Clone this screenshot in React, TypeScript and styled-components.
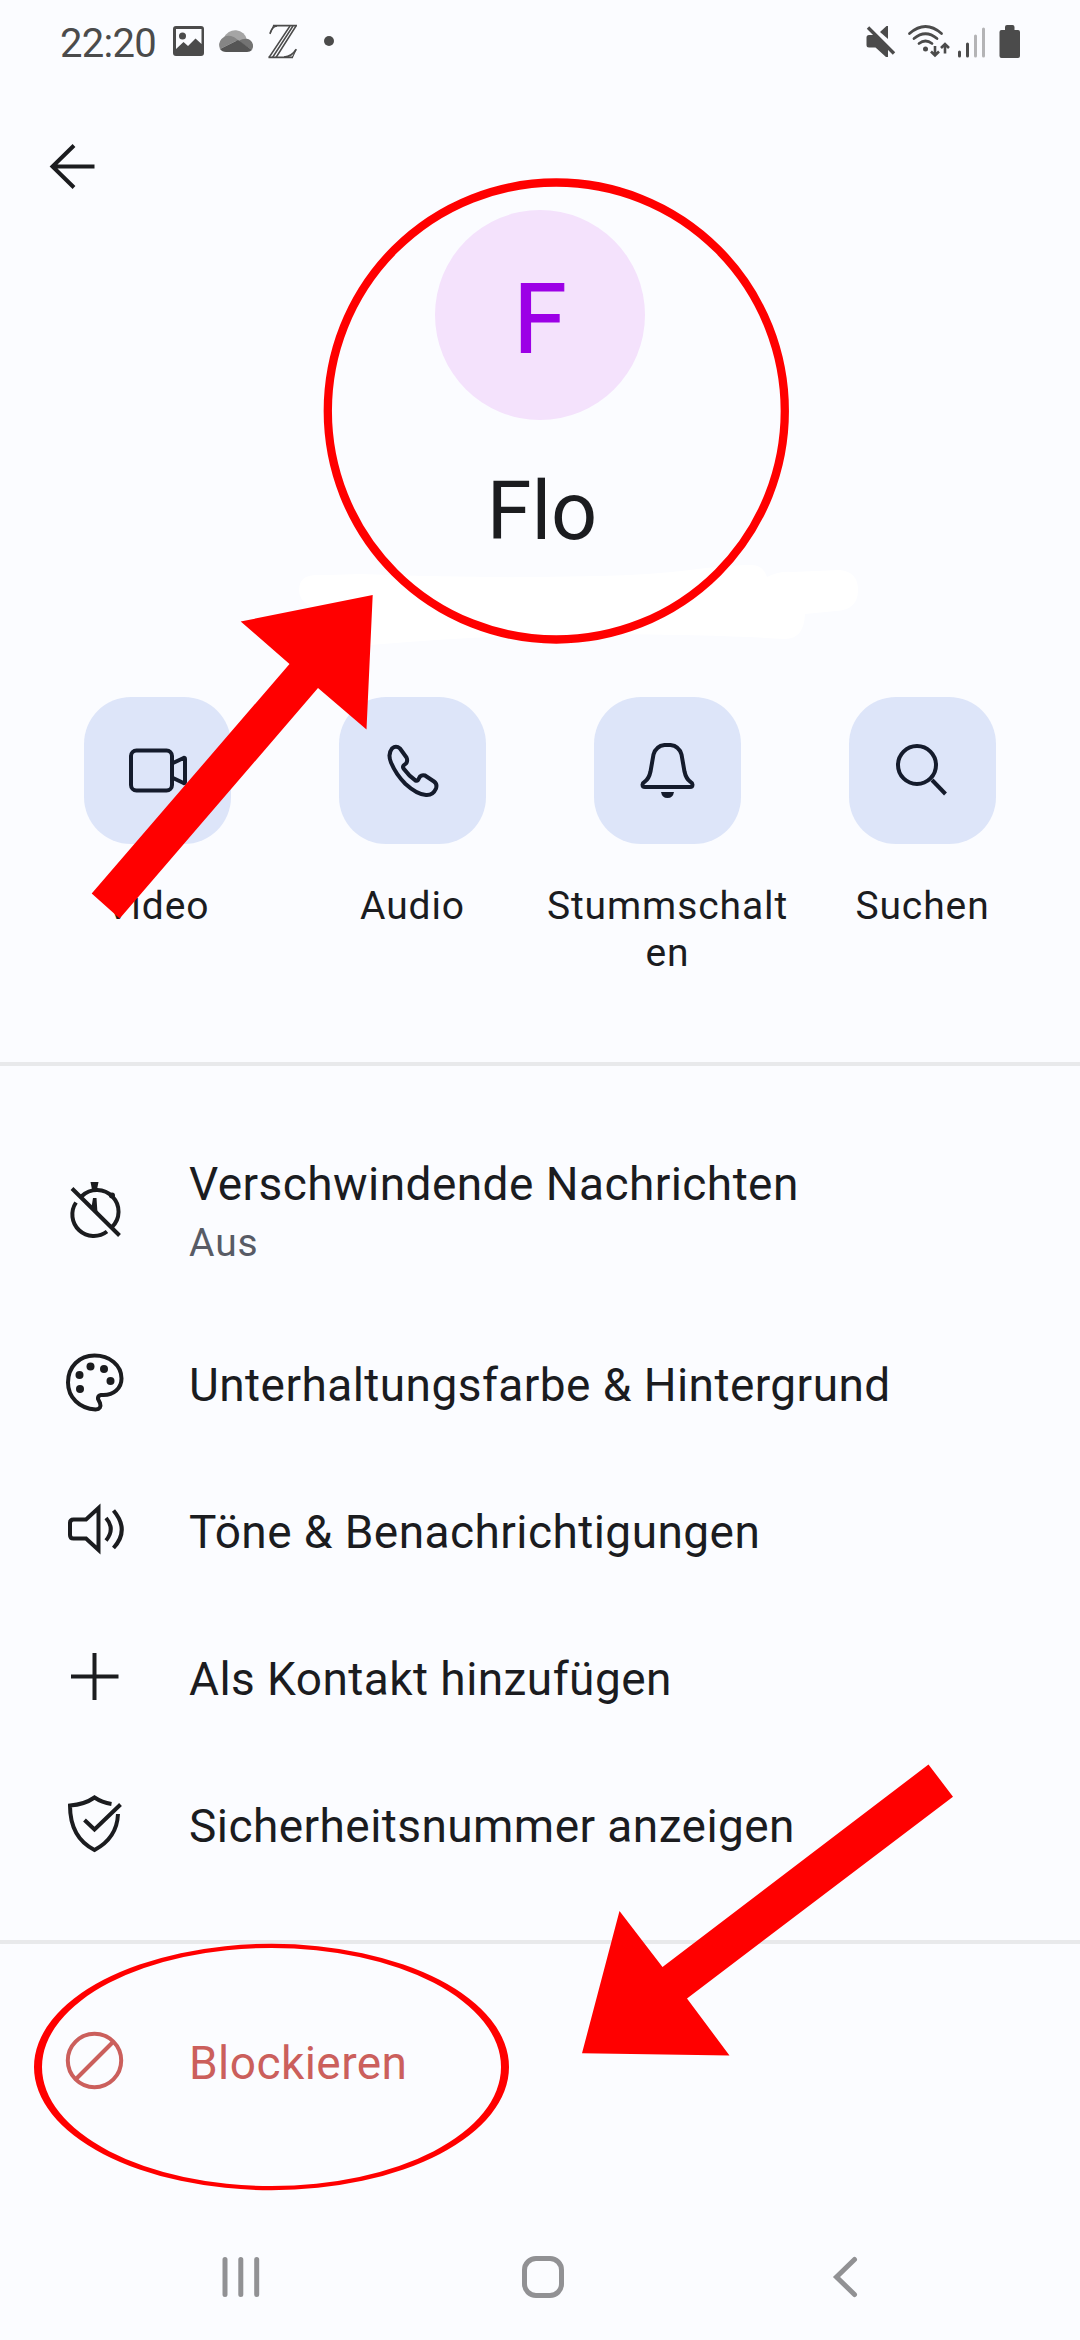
import React from "react";
import styled, { createGlobalStyle } from "styled-components";

const GlobalStyle = createGlobalStyle`
  * { box-sizing: border-box; }
  body { margin: 0; background: #fbfcff; font-family: Roboto, "Noto Sans", sans-serif; }
`;

const Screen = styled.main`
  position: relative;
  width: 1080px;
  height: 2340px;
  overflow: hidden;
  display: flex;
  flex-direction: column;
  background: #fbfcff;
  color: #1b1c1f;
`;

const StatusBar = styled.header`
  display: flex;
  justify-content: space-between;
  height: 84px;
  padding: 18px 59px 0 60px;
  color: #4b4b4b;
`;

const StatusGroup = styled.div`
  display: flex;
  align-items: flex-start;
`;

const Clock = styled.time`
  width: 111px;
  padding-top: 1px;
  font-size: 40px;
  line-height: 50px;
  letter-spacing: -0.7px;
`;

const Glyph = styled.svg<{ $w: number; $h: number }>`
  display: block;
  flex: none;
  width: ${(p) => p.$w}px;
  height: ${(p) => p.$h}px;
  fill: none;
  overflow: visible;
`;

const TopBar = styled.div`
  display: flex;
  height: 126px;
  padding: 51px 0 0 41px;
`;

const Profile = styled.section`
  display: flex;
  flex-direction: column;
  align-items: center;
  height: 487px;
`;

const Avatar = styled.div`
  display: flex;
  align-items: center;
  justify-content: center;
  width: 210px;
  height: 210px;
  border-radius: 50%;
  background: #f4e2fc;
  color: #9c00e6;
  font-size: 96px;
  line-height: 1;
  padding-top: 8px;
  -webkit-text-stroke: 1.2px #9c00e6;
`;

const ContactName = styled.h1`
  margin: 44px 0 0 4px;
  font-size: 81px;
  font-weight: 400;
  line-height: 96px;
`;

const Actions = styled.section`
  display: grid;
  grid-template-columns: repeat(4, 255px);
  justify-content: center;
  height: 365px;
`;

const Action = styled.div`
  display: flex;
  flex-direction: column;
  align-items: center;
  gap: 39px;
`;

const ActionButton = styled.button`
  display: flex;
  align-items: center;
  justify-content: center;
  width: 147px;
  height: 147px;
  padding: 0;
  border: 0;
  border-radius: 47px;
  background: #dde5f9;
  color: #141b2c;
`;

const ActionLabel = styled.span`
  width: 248px;
  font-size: 39px;
  line-height: 47px;
  letter-spacing: 0.9px;
  text-align: center;
  word-break: break-all;
`;

const Divider = styled.hr`
  flex: none;
  width: 100%;
  height: 4px;
  margin: 0;
  border: 0;
  background: #e8e9eb;
`;

const Settings = styled.section<{ $height: number }>`
  display: flex;
  flex-direction: column;
  height: ${(p) => p.$height}px;
  padding-top: 45px;
`;

const Row = styled.div<{ $tall?: boolean; $danger?: boolean }>`
  display: flex;
  align-items: center;
  gap: 63px;
  height: ${(p) => (p.$tall ? 200 : 147)}px;
  padding-left: 63px;
  color: ${(p) => (p.$danger ? "#cb5f5c" : "inherit")};

  > svg { margin-bottom: ${(p) => (p.$tall ? -1 : 6)}px; }
`;

const RowText = styled.div<{ $tall?: boolean }>`
  display: flex;
  flex-direction: column;
  padding-top: ${(p) => (p.$tall ? 4 : 0)}px;
`;

const RowTitle = styled.span`
  font-size: 46px;
  line-height: 60px;
  letter-spacing: 0.44px;
`;

const RowHint = styled.span`
  font-size: 39px;
  line-height: 58px;
  letter-spacing: 0.9px;
  color: #585b65;
`;

const NavBar = styled.nav`
  display: flex;
  align-items: center;
  height: 126px;
  margin-top: auto;
  padding-left: 219px;
  color: #919194;
`;

const NavGap = styled.span<{ $w: number }>`
  width: ${(p) => p.$w}px;
`;

const MarkupLayer = styled.svg`
  position: absolute;
  inset: 0;
  width: 1080px;
  height: 2340px;
  pointer-events: none;
`;

const icon = { stroke: "currentColor", strokeWidth: 4 } as const;

const StatusIconsLeft = () => (
  <Glyph $w={170} $h={50} viewBox="171 18 170 50">
    <path
      fillRule="evenodd"
      fill="currentColor"
      d="M176 26h25q3 0 3 3v24q0 3-3 3h-25q-3 0-3-3v-24q0-3 3-3ZM176 29v20l7.500-7 4.500 4 7.500-7.500 6 5.500v-15Z"
    />
    <circle cx="182.500" cy="36" r="3.500" fill="currentColor" />
    <path d="M224 38a12 12 0 0 1 23 2l-10 1z" fill="#a5a5a5" />
    <path d="M220 49a9.500 9.500 0 0 1 11-13q3 .5 7 4l-18 9Z" fill="#858585" />
    <path d="M238 41q8-4 12-1a7.500 7.500 0 0 1 2 10Z" fill="#737373" />
    <path d="M220 49l18-9 14 10q-2 2-5 2h-21q-4 0-6-3Z" fill="#555" />
    <g stroke="currentColor" strokeWidth="1.500">
      <path d="M290 26l-21 31.500M293 26l-20.500 31.500M296 26l-20 31.500" />
      <path d="M270 33.500q2-7 7-7.500M296 49.500q-4 7-12 7.500" strokeWidth="1.600" />
      <path d="M273.500 25.700l-3.500 8.300M292.500 57.300l3.800-8.300" strokeWidth="1.200" />
      <path d="M273 25.700h24M268.500 57.300h24.500" strokeWidth="1.800" />
    </g>
    <circle cx="329" cy="41" r="5" fill="currentColor" />
  </Glyph>
);

const StatusIconsRight = () => (
  <Glyph $w={156} $h={50} viewBox="865 18 156 50">
    <g fill="currentColor">
      <path d="M869 35h5.500L888 47v10h-2l-10.500-9.500H869q-2.500 0-2.500-2.500v-7.500q0-2.500 2.500-2.500Z" />
      <path d="M880 32l6.500-6h1.500v13Z" />
      <circle cx="925.500" cy="49" r="2.500" />
      <path d="M1001.500 30H1005v-3q0-2 2-2h5.500q2 0 2 2v3h3.500q2 0 2 2v24q0 2-2 2h-16.500q-2 0-2-2v-24q0-2 2-2Z" />
    </g>
    <g stroke="currentColor" strokeWidth="3">
      <path d="M868 27.500l26 26" strokeWidth="3.400" />
      <path d="M909.500 33.500q16-14 32 0M914 38.500q11.500-9.500 23 0M919 43.500q6.500-5 13 0" strokeLinecap="round" strokeWidth="2.800" />
      <path d="M935 46v9M931 51.500l4 4 4-4M945 53.500v-9M941 48l4-4 4 4" strokeWidth="2.600" />
      <path d="M959.500 52v4M967.500 44v12" strokeLinecap="round" />
      <path d="M975.500 36v20M983.500 29v27" strokeLinecap="round" stroke="#b4b4b6" />
    </g>
  </Glyph>
);

const BackArrow = () => (
  <Glyph $w={63} $h={63} viewBox="41 135 63 63" {...icon}>
    <path d="M94.500 166.500H53M74 145.500l-21.500 21 21.500 21" />
  </Glyph>
);

const VideoIcon = () => (
  <Glyph $w={63} $h={63} viewBox="126 739 63 63" {...icon}>
    <rect x="131" y="750.500" width="41" height="40" rx="5.500" />
    <path d="M173 763l10.500-5q1.500-.5 1.500 1v23q0 1.500-1.500 1l-10.500-5" />
  </Glyph>
);

const PhoneIcon = () => (
  <Glyph $w={63} $h={63} viewBox="381 739 63 63" {...icon}>
    <path
      strokeLinejoin="round"
      d="M392 748.500q4-3.500 8 0l6.500 9q1.500 3.500-.5 6l-2.500 2q-1 1.500 0 3 5.500 7.500 12 12 1.500.5 2.500-.5l2-3.500q2-2 5-1l9 6q3.500 2.500 2 7-3 7-10 6.500-9-.5-20.500-11-9.500-9.500-14.500-21.500-3.500-8.500 1-14Z"
    />
  </Glyph>
);

const BellIcon = () => (
  <Glyph $w={63} $h={63} viewBox="636 739 63 63" {...icon}>
    <path d="M645 787h45q2.500 0 2.500-2.500 0-1.500-2.500-3-4-3-5.500-10l-3-17q-2.500-8.500-11-9.500h-6q-8.500 1-11 9.500l-3 17q-1.500 7-5.500 10-2.500 1.500-2.500 3 0 2.500 2.500 2.500Z" />
    <path d="M661 792h13q-1 6-6.500 6t-6.500-6Z" fill="currentColor" stroke="none" />
  </Glyph>
);

const SearchIcon = () => (
  <Glyph $w={63} $h={63} viewBox="891 739 63 63" {...icon}>
    <circle cx="917" cy="765" r="19" />
    <path d="M932 780l13.500 14" />
  </Glyph>
);

const TimerOffIcon = () => (
  <Glyph $w={63} $h={63} viewBox="63 1180 63 63" {...icon}>
    <path d="M76 1202.500a21.500 21.500 0 0 0 31 29M82 1196a21.500 21.500 0 0 1 30 31M72 1188.500l47.500 47" />
    <path d="M90.500 1182h8l-2 10h-4ZM93 1198h3.500l1 15-6-6Z" fill="currentColor" stroke="none" />
    <circle cx="112" cy="1195.500" r="3" fill="currentColor" stroke="none" />
  </Glyph>
);

const PaletteIcon = () => (
  <Glyph $w={63} $h={63} viewBox="63 1350 63 63" {...icon}>
    <path d="M94.500 1355.500c15 0 27 9.500 27 23 0 10-8 16.500-18 16.500h-2.500q-3.500.5-3 4l2 4q2 6-4.500 6.500c-16-1-27.500-12-27.500-27 0-16 11.500-27 26.500-27Z" />
    <g fill="currentColor" stroke="none">
      <circle cx="79.500" cy="1375" r="4" />
      <circle cx="90.500" cy="1366.500" r="4" />
      <circle cx="104" cy="1369" r="4" />
      <circle cx="110.500" cy="1381" r="4" />
      <circle cx="80" cy="1389" r="4" />
    </g>
  </Glyph>
);

const SpeakerIcon = () => (
  <Glyph $w={63} $h={63} viewBox="63 1497 63 63" {...icon}>
    <path d="M73.500 1519.500h12.500l12.500-11.500v42l-12.500-11.500h-12.500q-3.500 0-3.500-3.500v-12q0-3.500 3.500-3.500ZM106 1518q9.500 11 0 22.500M113.500 1510.500q16.500 19.500 0 37.500" />
  </Glyph>
);

const PlusIcon = () => (
  <Glyph $w={63} $h={63} viewBox="63 1644 63 63" {...icon}>
    <path d="M71 1676.500h47.500M94.500 1653v47" />
  </Glyph>
);

const ShieldIcon = () => (
  <Glyph $w={63} $h={63} viewBox="63 1791 63 63" {...icon}>
    <path d="M111.500 1804q-9.500-1.500-17-6.500-10 7-24.500 8 0 32 24.500 44.500 22.500-12 23.500-36M84.500 1820l10 9.500 26-25" />
  </Glyph>
);

const BlockIcon = () => (
  <Glyph $w={63} $h={63} viewBox="63 2028 63 63" {...icon}>
    <circle cx="94.500" cy="2060.500" r="26.700" />
    <path d="M75.500 2079.500l38-38" />
  </Glyph>
);

const actions = [
  { label: "Video", Icon: VideoIcon },
  { label: "Audio", Icon: PhoneIcon },
  { label: "Stummschalten", Icon: BellIcon },
  { label: "Suchen", Icon: SearchIcon },
];

const settings = [
  { title: "Verschwindende Nachrichten", hint: "Aus", Icon: TimerOffIcon },
  { title: "Unterhaltungsfarbe & Hintergrund", Icon: PaletteIcon },
  { title: "Töne & Benachrichtigungen", Icon: SpeakerIcon },
  { title: "Als Kontakt hinzufügen", Icon: PlusIcon },
  { title: "Sicherheitsnummer anzeigen", Icon: ShieldIcon },
];

const EraserStroke = () => (
  <MarkupLayer viewBox="0 0 1080 2340">
    <path
      fill="#fff"
      d="M299 590q0-15 18-15 20 0 43-1 120 5 240 2 50-1 90-6 40-5 62-5 12 1 15 12 12-6 25-5l48-2q18 2 18 20 0 20-22 21l-31 3q-1 25-20 25-60-4-183-5-120 1-232 11-50 0-60-40-11-4-11-15Z"
    />
  </MarkupLayer>
);

const Annotations = () => (
  <MarkupLayer viewBox="0 0 1080 2340" fill="#f00">
    <circle cx="556.300" cy="411" r="228.500" fill="none" stroke="#f00" strokeWidth="8.300" />
    <path d="M372.700 595 240.700 621.500 289.500 664 91.700 893.500 119.700 918.500 318 688 366.500 729.500Z" />
    <path
      fillRule="evenodd"
      d="M34 2067a237.500 123.200 0 1 0 475 0a237.500 123.200 0 1 0-475 0ZM42 2067a229.500 119 0 1 1 459 0a229.500 119 0 1 1-459 0Z"
    />
    <path d="M582 2053.300 619.500 1911 662.500 1967 928.500 1764.500 953 1796.700 687 1998.500 729.500 2055.500Z" />
  </MarkupLayer>
);

export default function App() {
  return (
    <>
      <GlobalStyle />
      <Screen>
        <EraserStroke />
        <StatusBar>
          <StatusGroup>
            <Clock>22:20</Clock>
            <StatusIconsLeft />
          </StatusGroup>
          <StatusGroup>
            <StatusIconsRight />
          </StatusGroup>
        </StatusBar>
        <TopBar>
          <BackArrow />
        </TopBar>
        <Profile>
          <Avatar>F</Avatar>
          <ContactName>Flo</ContactName>
        </Profile>
        <Actions>
          {actions.map(({ label, Icon }) => (
            <Action key={label}>
              <ActionButton>
                <Icon />
              </ActionButton>
              <ActionLabel>{label}</ActionLabel>
            </Action>
          ))}
        </Actions>
        <Divider />
        <Settings $height={874}>
          {settings.map(({ title, hint, Icon }) => (
            <Row key={title} $tall={!!hint}>
              <Icon />
              <RowText $tall={!!hint}>
                <RowTitle>{title}</RowTitle>
                {hint && <RowHint>{hint}</RowHint>}
              </RowText>
            </Row>
          ))}
        </Settings>
        <Divider />
        <Settings $height={220}>
          <Row $danger>
            <BlockIcon />
            <RowTitle>Blockieren</RowTitle>
          </Row>
        </Settings>
        <NavBar>
          <Glyph $w={43} $h={42} viewBox="219 2256 43 42" stroke="currentColor" strokeWidth="5" strokeLinecap="round">
            <path d="M225 2259.500v35M240.800 2259.500v35M256.700 2259.500v35" />
          </Glyph>
          <NavGap $w={260} />
          <Glyph $w={42} $h={42} viewBox="522 2256 42 42" stroke="currentColor" strokeWidth="5">
            <rect x="524.500" y="2258.500" width="37" height="37" rx="11.500" />
          </Glyph>
          <NavGap $w={269} />
          <Glyph $w={25} $h={42} viewBox="833 2256 25 42" stroke="currentColor" strokeWidth="5" strokeLinecap="round">
            <path d="M854.500 2259.500l-18 17.500 18 17.500" />
          </Glyph>
        </NavBar>
        <Annotations />
      </Screen>
    </>
  );
}
